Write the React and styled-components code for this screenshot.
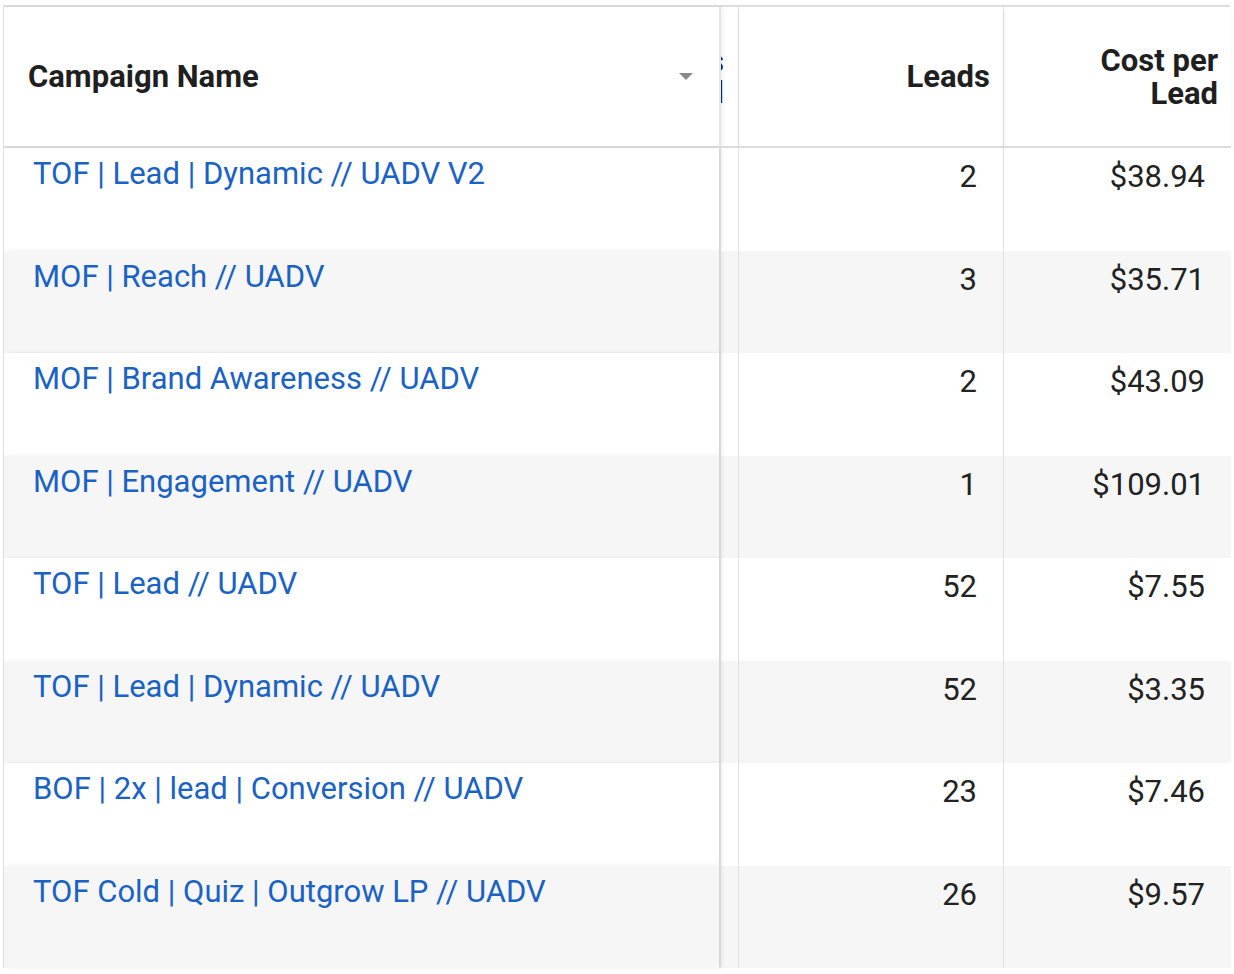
import React from 'react';
import styled, { createGlobalStyle } from 'styled-components';

const Global = createGlobalStyle`
  body { margin: 0; background: #fff; font-family: Roboto, "Liberation Sans", sans-serif; }
`;

const rows = [
  ['TOF | Lead | Dynamic // UADV V2', '2', '$38.94'],
  ['MOF | Reach // UADV', '3', '$35.71'],
  ['MOF | Brand Awareness // UADV', '2', '$43.09'],
  ['MOF | Engagement // UADV', '1', '$109.01'],
  ['TOF | Lead // UADV', '52', '$7.55'],
  ['TOF | Lead | Dynamic // UADV', '52', '$3.35'],
  ['BOF | 2x | lead | Conversion // UADV', '23', '$7.46'],
  ['TOF Cold | Quiz | Outgrow LP // UADV', '26', '$9.57'],
];

const Wrap = styled.div`
  padding: 5px 4px 0 3px;
  width: 1227px;
  height: 969px;
  overflow: hidden;
`;

const Table = styled.div`
  display: grid;
  grid-template-columns: 715px 20px 265px 227px;
  grid-template-rows: 141px repeat(8, 102.5px);
  border-top: 2px solid #dedede;
  border-left: 1px solid #dedede;
`;

const HeadCell = styled.div`
  display: flex;
  align-items: center;
  justify-content: ${p => (p.right ? 'flex-end' : 'space-between')};
  padding: 0 ${p => (p.right ? '13px' : '26px')} 0 24px;
  font-weight: 700;
  font-size: 31px;
  line-height: 33px;
  color: #1f1f1f;
  text-align: right;
  border-bottom: 2px solid #dcdcdc;
  box-shadow: 0 3px 4px rgba(0,0,0,0.06);
  border-right: ${p => (p.line ? '1px solid #e0e0e0' : 'none')};
  ${p => p.sticky && 'box-shadow: 3px 0 4px rgba(0,0,0,0.08);'}
`;

const Clip = styled.div`
  display: flex;
  align-items: center;
  overflow: hidden;
  border-bottom: 2px solid #dcdcdc;
  border-right: 1px solid #e0e0e0;
  border-left: 2px solid #e6e6e6;
  font-weight: 700;
  font-size: 31px;
  line-height: 31px;
  color: #1f1f1f;
  direction: rtl;
  white-space: pre;
  padding-right: 14px;
`;

const Caret = styled.span`
  width: 0;
  height: 0;
  border-left: 7px solid transparent;
  border-right: 7px solid transparent;
  border-top: 7px solid #8a8a8a;
`;

const Cell = styled.div`
  background: ${p => (p.alt ? '#f6f6f6' : '#fff')};
  padding-top: ${p => (p.num ? '11px' : '8px')};
  padding-left: 29px;
  padding-right: ${p => (p.pad || 26)}px;
  text-align: ${p => (p.num ? 'right' : 'left')};
  font-size: 31px;
  line-height: 36px;
  color: ${p => (p.num ? '#222' : '#1a62c4')};
  border-right: ${p => (p.line ? '1px solid #e0e0e0' : 'none')};
  ${p => p.sticky && 'box-shadow: 3px 0 4px rgba(0,0,0,0.08); position: relative;'}
  white-space: nowrap;
`;

const Gap = styled.div`
  background: ${p => (p.alt ? '#f6f6f6' : '#fff')};
  border-left: 2px solid #e6e6e6;
  border-right: 1px solid #e0e0e0;
`;

export default function App() {
  return (
    <Wrap>
      <Global />
      <Table>
        <HeadCell sticky>
          <span>Campaign Name</span>
          <Caret />
        </HeadCell>
        <Clip>{'s\nl'}</Clip>
        <HeadCell right line>Leads</HeadCell>
        <HeadCell right>Cost per<br />Lead</HeadCell>
        {rows.map(([name, leads, cost], i) => (
          <React.Fragment key={i}>
            <Cell alt={i % 2 === 1} sticky>{name}</Cell>
            <Gap alt={i % 2 === 1} />
            <Cell alt={i % 2 === 1} num line>{leads}</Cell>
            <Cell alt={i % 2 === 1} num pad={26}>{cost}</Cell>
          </React.Fragment>
        ))}
      </Table>
    </Wrap>
  );
}
